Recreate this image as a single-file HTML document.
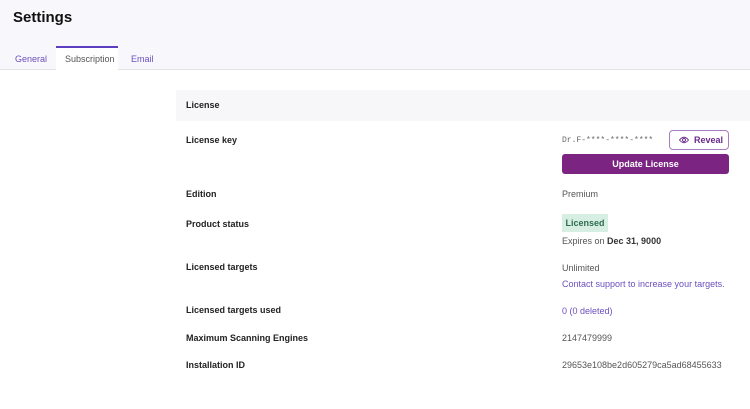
<!DOCTYPE html>
<html><head><style>
body{margin:0;width:750px;height:409px;background:#fff;font-family:"Liberation Sans",sans-serif;position:relative;overflow:hidden;color:#222}
.hdr{position:absolute;left:0;top:0;width:750px;height:69px;background:#f8f7fb;border-bottom:1px solid #e2e2e6}
.t{position:absolute;left:13px;top:9px;font-size:15px;font-weight:bold;color:#111}
.tab{position:absolute;top:54px;font-size:9px;color:#6b4fbf}
.act{position:absolute;left:56px;top:46px;width:62px;height:24px;background:#fff;border-top:2px solid #5b3fc0;box-sizing:border-box}
.a{position:absolute;font-size:9px}
.l{left:186px;font-weight:bold;color:#222}
.v{left:562px;color:#555}
.p{color:#6b4fbf}
</style></head><body>
<div class="hdr"><div class="t">Settings</div>
<div class="act"></div>
<div class="tab" style="left:15px">General</div>
<div class="tab" style="left:65px;color:#555">Subscription</div>
<div class="tab" style="left:131px">Email</div></div>
<div style="position:absolute;left:176px;top:90px;width:574px;height:31px;background:#f7f7f9"></div>
<div class="a l" style="top:100px">License</div>
<div class="a l" style="top:135px">License key</div>
<div class="a" style="left:562px;top:136px;font-family:'Liberation Mono',monospace;font-size:8px;color:#666">Dr.F-****-****-****</div>
<div style="position:absolute;left:669px;top:130px;width:60px;height:20px;border:1px solid #a87cc0;border-radius:4px;box-sizing:border-box;font-size:9px;font-weight:bold;color:#6a2a8a;line-height:18px">
<svg style="position:absolute;left:9px;top:5px" width="10" height="8" viewBox="0 0 10 8"><path d="M0.5 4Q5 -1.5 9.5 4Q5 9.5 0.5 4Z" fill="none" stroke="#6a2a8a" stroke-width="0.9"/><circle cx="5" cy="4" r="1.5" fill="none" stroke="#6a2a8a" stroke-width="0.9"/></svg><span style="position:absolute;left:24px">Reveal</span></div>
<div style="position:absolute;left:562px;top:154px;width:167px;height:20px;background:#7b2482;border-radius:3px;color:#fff;font-size:9px;font-weight:bold;text-align:center;line-height:20px">Update License</div>
<div class="a l" style="top:189px">Edition</div>
<div class="a v" style="top:189px">Premium</div>
<div class="a l" style="top:219px">Product status</div>
<div style="position:absolute;left:562px;top:214px;width:46px;height:18px;background:#d7efe3;color:#2e6e4e;font-size:9px;font-weight:bold;line-height:18px;text-align:center">Licensed</div>
<div class="a v" style="top:236px">Expires on <b style="color:#333">Dec 31, 9000</b></div>
<div class="a l" style="top:262px">Licensed targets</div>
<div class="a v" style="top:263px">Unlimited</div>
<div class="a v p" style="top:279px">Contact support to increase your targets.</div>
<div class="a l" style="top:305px">Licensed targets used</div>
<div class="a v p" style="top:306px">0 (0 deleted)</div>
<div class="a l" style="top:333px">Maximum Scanning Engines</div>
<div class="a v" style="top:333px">2147479999</div>
<div class="a l" style="top:360px">Installation ID</div>
<div class="a v" style="top:360px">29653e108be2d605279ca5ad68455633</div>
</body></html>
